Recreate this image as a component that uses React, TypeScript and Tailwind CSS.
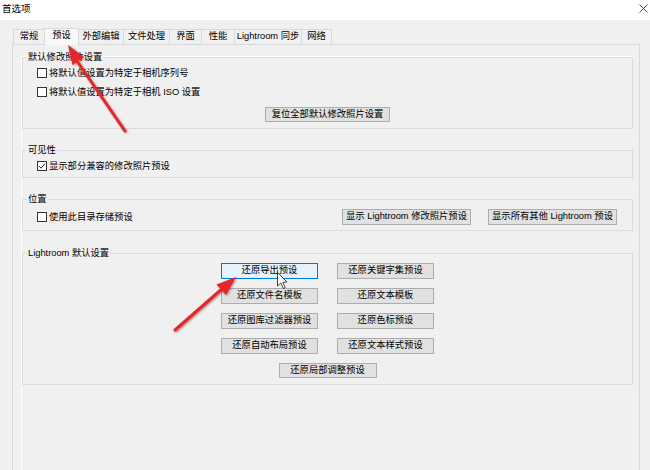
import React from "react";

const font = { fontFamily: '"Liberation Sans", "Noto Sans CJK SC", sans-serif' };

const tabs = ["常规", "预设", "外部编辑", "文件处理", "界面", "性能", "Lightroom 同步", "网络"];
const tabWidths = ["w-[32px]", "w-[35px]", "w-[46px]", "w-[47px]", "w-[33px]", "w-[34px]", "w-[68px]", "w-[31px]"];

export default function App() {
  return (
    <div
      className="relative w-[650px] h-[470px] overflow-hidden bg-[#f0f0f0] text-[9.3px] text-black"
      style={font}
    >
      {/* title bar */}
      <div className="h-[20px] bg-white flex items-center justify-between pl-[2px] pr-[2px]">
        <span className="text-[9.5px] leading-none -mt-[3px]">首选项</span>
        <svg width="9" height="9" viewBox="0 0 9 9" className="-mt-[3px]">
          <path d="M0.5 0.5 L8.5 8.5 M8.5 0.5 L0.5 8.5" stroke="#333" strokeWidth="0.9" />
        </svg>
      </div>

      {/* tabs */}
      <div className="ml-[13px] mt-[7px] flex items-end h-[17px]">
        {tabs.map((t, i) => (
          <div
            key={t}
            className={
              i === 1
                ? `${tabWidths[i]} h-[17px] -ml-px -mb-px relative z-10 bg-[#f8f8f8] border border-b-0 border-[#d9d9d9] flex items-center justify-center pb-[2px]`
                : `${tabWidths[i]} h-[15px] bg-[#f0f0f0] border border-b-0 border-[#d9d9d9] -ml-px first:ml-0 flex items-center justify-center`
            }
          >
            {t}
          </div>
        ))}
      </div>

      {/* tab panel */}
      <div className="ml-[12px] w-[628px] h-[430px] border border-b-0 border-[#d9d9d9] pl-[8px] pr-[6px] pt-[11px]">
        <div className="border-l border-t border-white h-full">
          <Group label="默认修改照片设置" className="pt-[9px] pb-[6px]">
            <Check label="将默认值设置为特定于相机序列号" />
            <div className="mt-[7px]">
              <Check label="将默认值设置为特定于相机 ISO 设置" />
            </div>
            <div className="mt-[9px] flex justify-center">
              <Btn className="w-[125px] h-[15px]">复位全部默认修改照片设置</Btn>
            </div>
          </Group>

          <Group label="可见性" className="mt-[21px] pt-[9px] pb-[5px]">
            <Check label="显示部分兼容的修改照片预设" checked />
          </Group>

          <Group label="位置" className="mt-[21px] pt-[9px] pb-[5px] pr-[15px]">
            <div className="flex items-center">
              <Check label="使用此目录存储预设" />
              <div className="ml-auto flex gap-[17px]">
                <Btn className="w-[129px] h-[16px]">显示 Lightroom 修改照片预设</Btn>
                <Btn className="w-[129px] h-[16px]">显示所有其他 Lightroom 预设</Btn>
              </div>
            </div>
          </Group>

          <Group label="Lightroom 默认设置" className="mt-[22px] pt-[9px] pb-[6px]">
            <div className="flex flex-col items-center gap-[9px]">
              <div className="grid grid-cols-[97px_97px] gap-x-[19px] gap-y-[9px]">
                <Btn className="h-[16px]" hover>还原导出预设</Btn>
                <Btn className="h-[16px]">还原关键字集预设</Btn>
                <Btn className="h-[16px]">还原文件名模板</Btn>
                <Btn className="h-[16px]">还原文本模板</Btn>
                <Btn className="h-[16px]">还原图库过滤器预设</Btn>
                <Btn className="h-[16px]">还原色标预设</Btn>
                <Btn className="h-[16px]">还原自动布局预设</Btn>
                <Btn className="h-[16px]">还原文本样式预设</Btn>
              </div>
              <Btn className="w-[98px] h-[15px]">还原局部调整预设</Btn>
            </div>
          </Group>
        </div>
      </div>

      {/* annotations */}
      <svg className="absolute inset-0 pointer-events-none" width="650" height="470" viewBox="0 0 650 470">
        <g style={{ filter: "drop-shadow(1px 1px 1px rgba(90,0,0,0.45))" }}>
          <line x1="125" y1="131" x2="77" y2="61" stroke="#e5262a" strokeWidth="3" strokeLinecap="round" />
          <polygon points="68,45 84,57 72.5,65" fill="#e5262a" />
          <line x1="175" y1="330" x2="223" y2="288" stroke="#e5262a" strokeWidth="3" strokeLinecap="round" />
          <polygon points="236,277 226,295 216.5,284.5" fill="#e5262a" />
        </g>
        <path
          d="M277.5 272.5 L277.5 286 L280.8 283 L283.3 288.5 L285.2 287.6 L282.8 282.3 L287 282 Z"
          fill="#fff"
          stroke="#111"
          strokeWidth="0.8"
          strokeLinejoin="round"
        />
      </svg>
    </div>
  );
}

function Group({
  label,
  className = "",
  children,
}: {
  label: string;
  className?: string;
  children: React.ReactNode;
}) {
  return (
    <div className={`relative w-[611px] border border-[#dcdcdc] ${className}`}>
      <span className="absolute -top-[7px] left-[4px] bg-[#f0f0f0] px-px leading-[12px]">{label}</span>
      {children}
    </div>
  );
}

function Check({ label, checked = false }: { label: string; checked?: boolean }) {
  return (
    <div className="ml-[14px] flex items-center h-[12px] gap-[2px]">
      <span className="w-[10px] h-[10px] border border-[#333] bg-white flex items-center justify-center">
        {checked && (
          <svg width="8" height="8" viewBox="0 0 8 8">
            <path d="M1 4 L3 6.2 L7 1.5" fill="none" stroke="#222" strokeWidth="1" />
          </svg>
        )}
      </span>
      <span className="leading-[12px]">{label}</span>
    </div>
  );
}

function Btn({
  children,
  className = "",
  hover = false,
}: {
  children: React.ReactNode;
  className?: string;
  hover?: boolean;
}) {
  return (
    <div
      className={`${className} flex items-center justify-center whitespace-nowrap leading-none border ${
        hover ? "bg-[#e5f1fb] border-[#0078d7]" : "bg-[#e1e1e1] border-[#adadad]"
      }`}
    >
      {children}
    </div>
  );
}
